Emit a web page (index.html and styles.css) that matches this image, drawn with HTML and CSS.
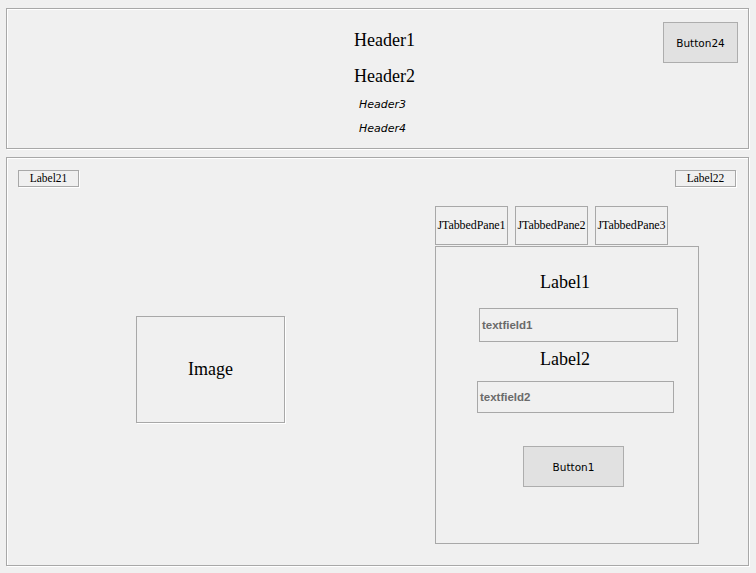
FILE: index.html
```html
<!DOCTYPE html>
<html>
<head>
<meta charset="utf-8">
<link rel="stylesheet" href="styles.css">
</head>
<body>
<div class="top-panel">
  <div class="headers">
    <div class="h1">Header1</div>
    <div class="h2">Header2</div>
    <div class="h3">Header3</div>
    <div class="h4">Header4</div>
  </div>
  <div class="btn btn24">Button24</div>
</div>
<div class="bottom-panel">
  <div class="label-row">
    <div class="small-label">Label21</div>
    <div class="small-label">Label22</div>
  </div>
  <div class="main-row">
    <div class="left-col">
      <div class="image-box">Image</div>
    </div>
    <div class="right-col">
      <div class="tabs">
        <div class="tab">JTabbedPane1</div>
        <div class="tab">JTabbedPane2</div>
        <div class="tab">JTabbedPane3</div>
      </div>
      <div class="tab-content">
        <div class="big-label label1">Label1</div>
        <div class="field field1">textfield1</div>
        <div class="big-label label2">Label2</div>
        <div class="field field2">textfield2</div>
        <div class="btn btn1">Button1</div>
      </div>
    </div>
  </div>
</div>
</body>
</html>
```
FILE: styles.css
```css
html, body {
  margin: 0;
  padding: 0;
  background: #f0f0f0;
}
body {
  width: 756px;
  height: 573px;
  overflow: hidden;
  font-family: "Liberation Serif", serif;
  color: #000;
}
.top-panel {
  margin: 8px 7px 0 6px;
  height: 139px;
  border: 1px solid #a8a8a8;
  box-shadow: 1px 1px 0 #fff, inset 1px 1px 0 #fff;
  display: grid;
  grid-template-columns: 1fr auto 1fr;
  box-sizing: content-box;
}
.headers {
  grid-column: 2;
  display: flex;
  flex-direction: column;
  align-items: center;
  padding-top: 21px;
  padding-left: 14px;
}
.h1, .h2 {
  font-size: 18px;
  line-height: 20px;
}
.h2 { margin-top: 16px; }
.h3, .h4 {
  font-family: "DejaVu Sans", sans-serif;
  font-style: italic;
  font-size: 11px;
  line-height: 16px;
  margin-left: -4px;
}
.h3 { margin-top: 11px; }
.h4 { margin-top: 8px; }
.btn {
  background: #e1e1e1;
  border: 1px solid #adadad;
  font-family: "DejaVu Sans", sans-serif;
  font-size: 10.5px;
  color: #000;
  display: flex;
  align-items: center;
  justify-content: center;
  box-sizing: border-box;
}
.btn24 {
  grid-column: 3;
  justify-self: end;
  align-self: start;
  width: 75px;
  height: 41px;
  margin-top: 13px;
  margin-right: 10px;
}
.bottom-panel {
  margin: 8px 7px 0 6px;
  border: 1px solid #a8a8a8;
  box-shadow: 1px 1px 0 #fff, inset 1px 1px 0 #fff;
  padding: 12px 12px 0 11px;
  box-sizing: content-box;
  height: 395px;
}
.label-row {
  display: flex;
  justify-content: space-between;
}
.small-label {
  width: 61px;
  height: 17px;
  box-sizing: border-box;
  border: 1px solid #a8a8a8;
  box-shadow: 1px 1px 0 #fff;
  font-size: 11.5px;
  line-height: 15px;
  text-align: center;
}
.main-row {
  display: flex;
}
.left-col {
  width: 417px;
}
.image-box {
  margin-left: 118px;
  margin-top: 129px;
  width: 149px;
  height: 107px;
  box-sizing: border-box;
  border: 1px solid #a8a8a8;
  box-shadow: 1px 1px 0 #fff;
  display: flex;
  align-items: center;
  justify-content: center;
  font-size: 18px;
}
.right-col {
  margin-top: 19px;
}
.tabs {
  display: flex;
  gap: 7px;
}
.tab {
  width: 73px;
  height: 39px;
  box-sizing: border-box;
  border: 1px solid #a8a8a8;
  display: flex;
  align-items: center;
  justify-content: center;
  font-size: 12px;
  white-space: nowrap;
  letter-spacing: -0.1px;
}
.tab-content {
  margin-top: 1px;
  width: 264px;
  height: 298px;
  box-sizing: border-box;
  border: 1px solid #a8a8a8;
  display: flex;
  flex-direction: column;
  align-items: flex-start;
}
.big-label {
  font-size: 18px;
  line-height: 20px;
  align-self: center;
  margin-left: -4px;
}
.label1 { margin-top: 25px; }
.label2 { margin-top: 7px; }
.field {
  box-sizing: border-box;
  border: 1px solid #a8a8a8;
  font-family: "Liberation Sans", sans-serif;
  font-weight: bold;
  font-size: 11.5px;
  color: #6a6a6a;
  display: flex;
  align-items: center;
  padding-left: 2px;
}
.field1 {
  margin-left: 43px;
  margin-top: 16px;
  width: 199px;
  height: 34px;
}
.field2 {
  margin-left: 41px;
  margin-top: 12px;
  width: 197px;
  height: 32px;
}
.btn1 {
  margin-left: 87px;
  margin-top: 33px;
  width: 101px;
  height: 41px;
}
```
